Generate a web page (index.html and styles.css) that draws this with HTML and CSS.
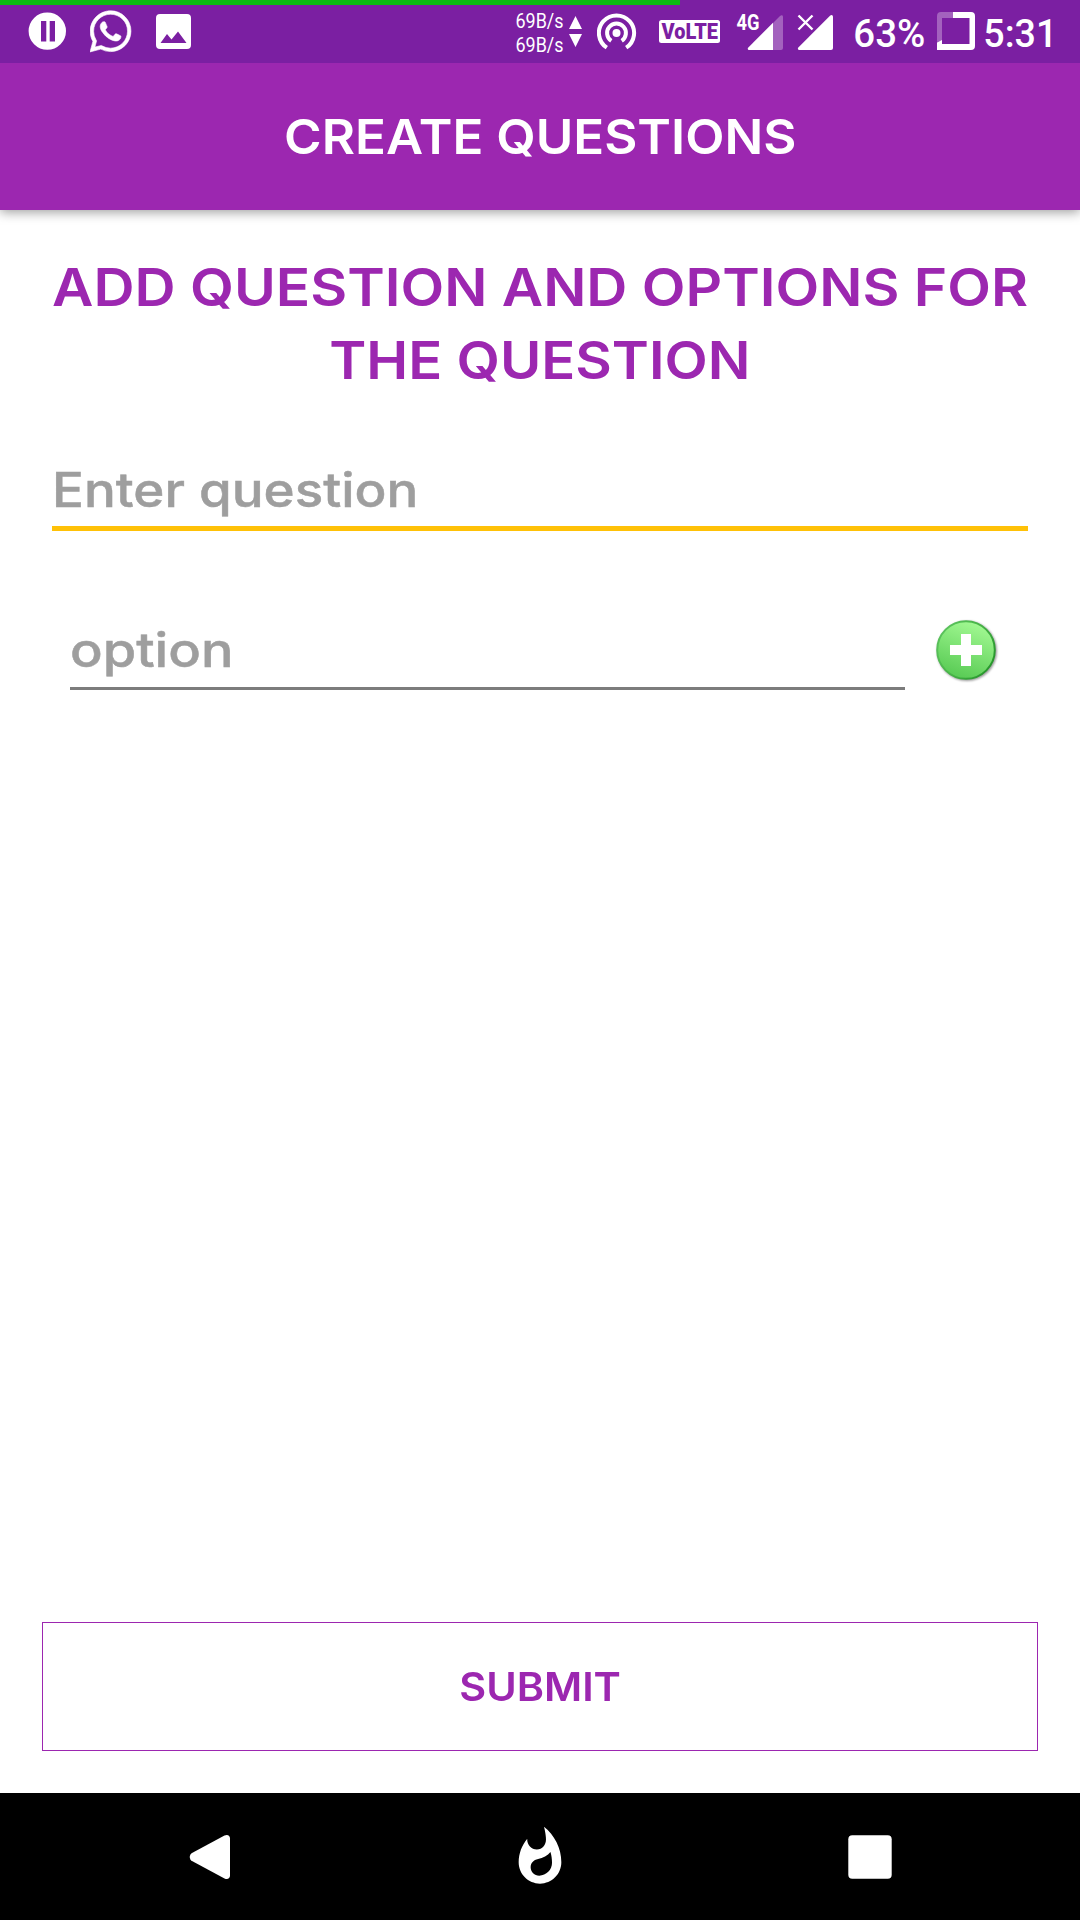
FILE: index.html
```html
<!DOCTYPE html>
<html lang="en">
<head>
<meta charset="utf-8">
<title>Create Questions</title>
<link rel="stylesheet" href="styles.css">
</head>
<body>
<div class="screen">
  <div class="status">
    <div class="progress"></div>
    <div class="status-left">
      <svg width="38" height="63" viewBox="28 0 38 63"><path fill="#fff" fill-rule="evenodd" d="M47.3 12.4a18.7 18.7 0 1 0 0 37.4a18.7 18.7 0 1 0 0-37.4zM41 21h5.3v20.5H41zM49.7 21H55v20.5h-5.3z"/></svg>
      <svg width="42" height="63" viewBox="89.5 0 42 63"><path transform="translate(89.4 10.8) scale(1.715)" fill="#fff" stroke="#fff" stroke-width=".35" d="M17.472 14.382c-.297-.149-1.758-.867-2.03-.967-.273-.099-.471-.148-.67.15-.197.297-.767.966-.94 1.164-.173.199-.347.223-.644.075-.297-.15-1.255-.463-2.39-1.475-.883-.788-1.48-1.761-1.653-2.059-.173-.297-.018-.458.13-.606.134-.133.298-.347.446-.52.149-.174.198-.298.298-.497.099-.198.05-.371-.025-.52-.075-.149-.669-1.612-.916-2.207-.242-.579-.487-.5-.669-.51-.173-.008-.371-.01-.57-.01-.198 0-.52.074-.792.372-.272.297-1.04 1.016-1.04 2.479 0 1.462 1.065 2.875 1.213 3.074.149.198 2.096 3.2 5.077 4.487.709.306 1.262.489 1.694.625.712.227 1.36.195 1.871.118.571-.085 1.758-.719 2.006-1.413.248-.694.248-1.289.173-1.413-.074-.124-.272-.198-.57-.347m-5.421 7.403h-.004a9.87 9.87 0 01-5.031-1.378l-.361-.214-3.741.982.998-3.648-.235-.374a9.86 9.86 0 01-1.51-5.26c.001-5.45 4.436-9.884 9.888-9.884 2.64 0 5.122 1.03 6.988 2.898a9.825 9.825 0 012.893 6.994c-.003 5.45-4.437 9.884-9.885 9.884m8.413-18.297A11.815 11.815 0 0012.05 0C5.495 0 .16 5.335.157 11.892c0 2.096.547 4.142 1.588 5.945L.057 24l6.305-1.654a11.882 11.882 0 005.683 1.448h.005c6.554 0 11.89-5.335 11.893-11.893a11.821 11.821 0 00-3.48-8.413Z"/></svg>
      <svg width="36" height="63" viewBox="156 0 36 63"><path fill="#fff" fill-rule="evenodd" d="M160 14h27a4 4 0 0 1 4 4v27a4 4 0 0 1-4 4h-27a4 4 0 0 1-4-4V18a4 4 0 0 1 4-4zM160.500 43h26l-8.500-11.500-6.500 8-4.500-5.500z"/></svg>
    </div>
    <div class="status-right">
      <svg class="net" width="70" height="63" viewBox="515 0 70 63"><g fill="#fff" font-size="20.500"><text x="515.500" y="28.200" textLength="48" lengthAdjust="spacingAndGlyphs">69B/s</text><text x="515.500" y="52.200" textLength="48" lengthAdjust="spacingAndGlyphs">69B/s</text><path d="M575.500 16l6.500 13h-13zM569 34h13l-6.500 13z"/></g></svg>
      <svg class="hotspot" width="40" height="63" viewBox="597 0 40 63"><g fill="none" stroke="#fff" stroke-width="4"><path d="M606.800 47.700A17.600 17.600 0 1 1 626.200 47.700"/><path d="M611.300 40.800A9.400 9.400 0 1 1 621.700 40.800"/></g><circle cx="616.500" cy="33" r="4" fill="#fff"/></svg>
      <svg class="volte" width="62" height="63" viewBox="659 0 62 63"><rect x="659" y="20" width="61" height="23" rx="2.500" fill="#fff"/><text x="661.500" y="39" font-size="21.500" font-weight="900" fill="#7b1fa2" textLength="56.500" lengthAdjust="spacingAndGlyphs">VoLTE</text></svg>
      <svg class="signal" width="48" height="63" viewBox="736 0 48 63"><path fill="#fff" fill-opacity=".3" d="M773 23V50h8a2 2 0 0 0 2-2V17c0-2-1.500-2.500-3-1z"/><path fill="#fff" d="M773 22.700V50h-23.500c-1.800 0-2.200-1.500-1.200-2.600z"/><text x="736.500" y="29.600" font-size="21.500" font-weight="700" fill="#fff" textLength="23" lengthAdjust="spacingAndGlyphs">4G</text></svg>
      <svg class="signal2" width="37" height="63" viewBox="797 0 37 63"><path fill="#fff" d="M833 17V48a2 2 0 0 1-2 2h-31.500c-1.800 0-2-1.500-1.200-2.500L830 15.700c1.500-1.300 3-.7 3 1.300z"/><path d="M798.500 15.500l14 14M812.500 15.500l-14 14" stroke="#fff" stroke-width="2.400"/></svg>
      <svg class="percent" width="75" height="63" viewBox="852 0 75 63"><text x="853.300" y="47" font-size="39" font-weight="500" fill="#fff" textLength="72" lengthAdjust="spacingAndGlyphs">63%</text></svg>
      <svg class="battery" width="38" height="63" viewBox="937 0 38 63"><path fill="#fff" fill-opacity=".3" d="M953 12h-12a4 4 0 0 0-4 4v26l5-1.500V18h11z"/><path fill="#fff" d="M953 12h18a4 4 0 0 1 4 4v30a4 4 0 0 1-4 4h-34v-7.500l5-2.500v4h27.500V18H953z"/></svg>
      <svg class="clock" width="79" height="63" viewBox="981 0 79 63"><text x="983.300" y="47" font-size="39" font-weight="500" fill="#fff" textLength="74" lengthAdjust="spacingAndGlyphs">5:31</text></svg>
    </div>
  </div>
  <header class="appbar"><h1>CREATE QUESTIONS</h1></header>
  <main class="content">
    <h2><span class="line1">ADD QUESTION AND OPTIONS FOR</span><span class="line2">THE QUESTION</span></h2>
    <div class="field question"><span>Enter question</span></div>
    <div class="option-row">
      <div class="field option"><span>option</span></div>
      <svg class="add" width="70" height="70" viewBox="0 0 70 70">
        <defs>
          <linearGradient id="disc" x1=".7" y1="0" x2=".35" y2="1"><stop offset="0" stop-color="#a4fa94"/><stop offset="1" stop-color="#57ca53"/></linearGradient>
          <linearGradient id="rim" x1="0" y1=".2" x2="1" y2=".8"><stop offset="0" stop-color="#5cc45e"/><stop offset=".5" stop-color="#47b347"/><stop offset="1" stop-color="#239329"/></linearGradient>
          <filter id="soft" x="-20%" y="-20%" width="140%" height="140%"><feGaussianBlur stdDeviation="1.200"/></filter>
        </defs>
        <circle cx="36" cy="36" r="30" fill="#000" fill-opacity=".4" filter="url(#soft)"/>
        <circle cx="35" cy="35" r="28.800" fill="url(#disc)" stroke="url(#rim)" stroke-width="2"/>
        <path fill="#fff" d="M30 19h10v11h11v10H40v11H30V40H19V30h11z"/>
      </svg>
    </div>
    <div class="submit"><span>SUBMIT</span></div>
  </main>
  <nav class="navbar">
    <svg width="44" height="48" viewBox="188 1833 44 48"><path fill="#fff" d="M192 1853l32.500-17.500c3-1.500 5.500 0 5.500 3v37c0 3-2.500 4.500-5.500 3L192 1861c-3-2-3-6 0-8z"/></svg>
    <svg width="64" height="64" viewBox="0 0 24 24"><path fill="#fff" d="M13.500.67s.74 2.650.74 4.800c0 2.060-1.350 3.730-3.410 3.730-2.070 0-3.630-1.670-3.630-3.730l.03-.36C5.210 7.510 4 10.620 4 14c0 4.420 3.580 8 8 8s8-3.580 8-8C20 8.610 17.410 3.800 13.500.67zM11.710 19c-1.780 0-3.220-1.400-3.220-3.140 0-1.620 1.050-2.760 2.810-3.120 1.770-.36 3.600-1.210 4.620-2.580.39 1.290.59 2.650.59 4.040 0 2.650-2.150 4.800-4.800 4.800z"/></svg>
    <svg width="44" height="44" viewBox="0 0 44 44"><rect x=".3" y=".3" width="43.400" height="43.400" rx="4" fill="#fff"/></svg>
  </nav>
</div>
</body>
</html>
```
FILE: styles.css
```css
* { box-sizing: border-box; }
body { margin: 0; background: #fff; font-family: Inter, "Open Sans", sans-serif; }
svg { display: block; flex: none; }
.screen { width: 1080px; height: 1920px; display: flex; flex-direction: column; background: #fff; overflow: hidden; }
.status { position: relative; height: 63px; flex: none; background: #7b1fa2; display: flex; justify-content: space-between; padding: 0 20px 0 28px; font-family: Roboto, sans-serif; }
.progress { position: absolute; left: 0; top: 0; width: 680px; height: 5px; background: #0bb913; }
.status-left { display: flex; gap: 24px; }
.status-right { display: flex; }
.hotspot { margin-left: 12px; }
.volte { margin-left: 22px; }
.signal { margin-left: 15px; }
.signal2 { margin-left: 13px; }
.percent { margin-left: 18px; }
.battery { margin-left: 10px; }
.clock { margin-left: 6px; }
.appbar { height: 147px; flex: none; background: #9c27b0; display: flex; justify-content: center; box-shadow: 0 2px 11px rgba(0, 0, 0, .4); clip-path: inset(0 0 -20px 0); }
h1 { margin: 37px 0 0; font-size: 48.500px; line-height: 73px; font-weight: 600; color: #fff; white-space: nowrap; transform: scaleX(1.053); }
.content { flex: 1; display: flex; flex-direction: column; }
h2 { margin: 41px 0 0; font-size: 52px; line-height: 73px; font-weight: 600; color: #9c27b0; display: flex; flex-direction: column; align-items: center; white-space: nowrap; }
.line1 { transform: scaleX(1.094); }
.line2 { transform: scaleX(1.081); }
.field { display: flex; align-items: flex-end; font-size: 48px; line-height: 60px; font-weight: 500; color: #9e9e9e; white-space: nowrap; -webkit-text-stroke: .5px #9e9e9e; }
.field span { transform-origin: 0 50%; }
.question { width: 976px; height: 80px; margin: 54px 0 0 52px; padding-bottom: 6px; border-bottom: 5px solid #ffc107; }
.question span { transform: scaleX(1.103); }
.option-row { display: flex; margin: 75px 0 0 70px; gap: 26px; }
.option { width: 835px; height: 84px; padding-bottom: 7px; border-bottom: 3px solid #7c7c7c; }
.option span { transform: scaleX(1.128); }
.add { margin-top: 9px; }
.submit { margin: auto 42px 42px; height: 129px; border: 1px solid #9c27b0; display: flex; align-items: center; justify-content: center; font-size: 40px; line-height: 50px; font-weight: 600; color: #9c27b0; }
.submit span { transform: scaleX(1.035); }
.navbar { height: 127px; flex: none; background: #000; display: flex; align-items: center; justify-content: space-between; padding: 0 188px; }
```
